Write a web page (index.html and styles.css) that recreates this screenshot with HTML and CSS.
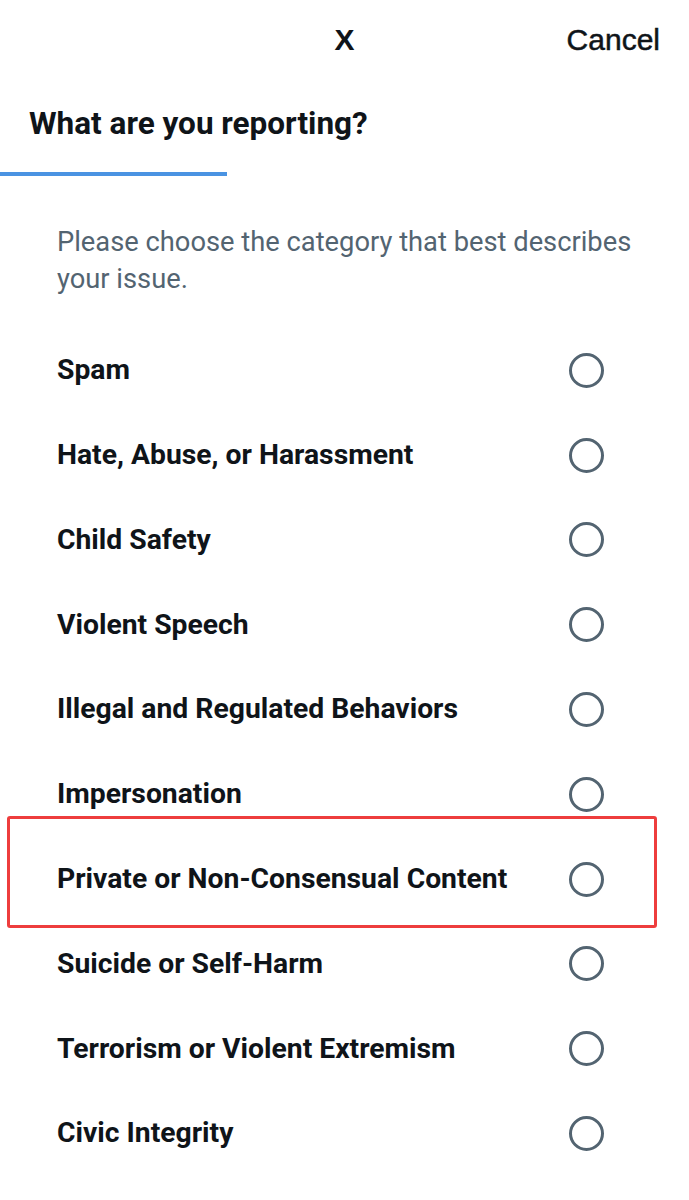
FILE: index.html
```html
<!DOCTYPE html>
<html lang="en">
<head>
<meta charset="utf-8">
<title>Report</title>
<link rel="stylesheet" href="styles.css">
</head>
<body>
<div class="screen">
  <header class="topbar">
    <span class="logo">X</span>
    <span class="cancel">Cancel</span>
  </header>
  <div class="tab">
    <h1 class="title">What are you reporting?</h1>
    <div class="tab-bar"></div>
  </div>
  <p class="desc">Please choose the category that best describes your issue.</p>
  <ul class="options">
    <li class="option"><span class="label">Spam</span><span class="radio"></span></li>
    <li class="option"><span class="label">Hate, Abuse, or Harassment</span><span class="radio"></span></li>
    <li class="option"><span class="label">Child Safety</span><span class="radio"></span></li>
    <li class="option"><span class="label">Violent Speech</span><span class="radio"></span></li>
    <li class="option"><span class="label">Illegal and Regulated Behaviors</span><span class="radio"></span></li>
    <li class="option"><span class="label">Impersonation</span><span class="radio"></span></li>
    <li class="option option-marked"><span class="label">Private or Non-Consensual Content</span><span class="radio"></span><span class="highlight"></span></li>
    <li class="option"><span class="label">Suicide or Self-Harm</span><span class="radio"></span></li>
    <li class="option"><span class="label">Terrorism or Violent Extremism</span><span class="radio"></span></li>
    <li class="option"><span class="label">Civic Integrity</span><span class="radio"></span></li>
  </ul>
</div>
</body>
</html>
```

FILE: styles.css
```css
* { box-sizing: border-box; }
html, body {
  margin: 0;
  padding: 0;
  background: #ffffff;
}
body {
  font-family: Roboto, "Liberation Sans", sans-serif;
  color: #0f1419;
}
.screen {
  width: 689px;
  min-height: 1200px;
  overflow: hidden;
}
.topbar {
  position: relative;
  height: 80px;
  display: flex;
  align-items: center;
  justify-content: center;
}
.logo {
  font-family: "Liberation Sans", sans-serif;
  font-weight: 700;
  font-size: 30px;
  line-height: 1;
  color: #0f1419;
}
.cancel {
  position: absolute;
  right: 29px;
  top: 50%;
  transform: translateY(-50%);
  font-family: "Liberation Sans", sans-serif;
  font-size: 30px;
  line-height: 1;
  color: #0f1419;
  -webkit-text-stroke: 0.5px #0f1419;
}
.tab {
  padding-top: 24px;
}
.title {
  margin: 0;
  padding-left: 29px;
  font-size: 31.5px;
  line-height: 40px;
  font-weight: 700;
}
.tab-bar {
  margin-top: 28px;
  width: 227px;
  height: 4px;
  background: #4a93e2;
}
.desc {
  margin: 48px 20px 0 57px;
  font-size: 27.3px;
  line-height: 37px;
  color: #536471;
}
.options {
  list-style: none;
  margin: 30px 0 0 0;
  padding: 0;
}
.option {
  position: relative;
  height: 84.8px;
  display: flex;
  align-items: center;
  justify-content: space-between;
  padding: 0 85px 0 57px;
}
.label {
  font-size: 28.3px;
  font-weight: 700;
  line-height: 1;
}
.radio {
  width: 35px;
  height: 35px;
  border: 3px solid #536471;
  border-radius: 50%;
}
.highlight {
  position: absolute;
  left: 7px;
  right: 32px;
  top: -21px;
  height: 112px;
  border: 3px solid #ee3d3d;
  border-radius: 3px;
  pointer-events: none;
}
```
